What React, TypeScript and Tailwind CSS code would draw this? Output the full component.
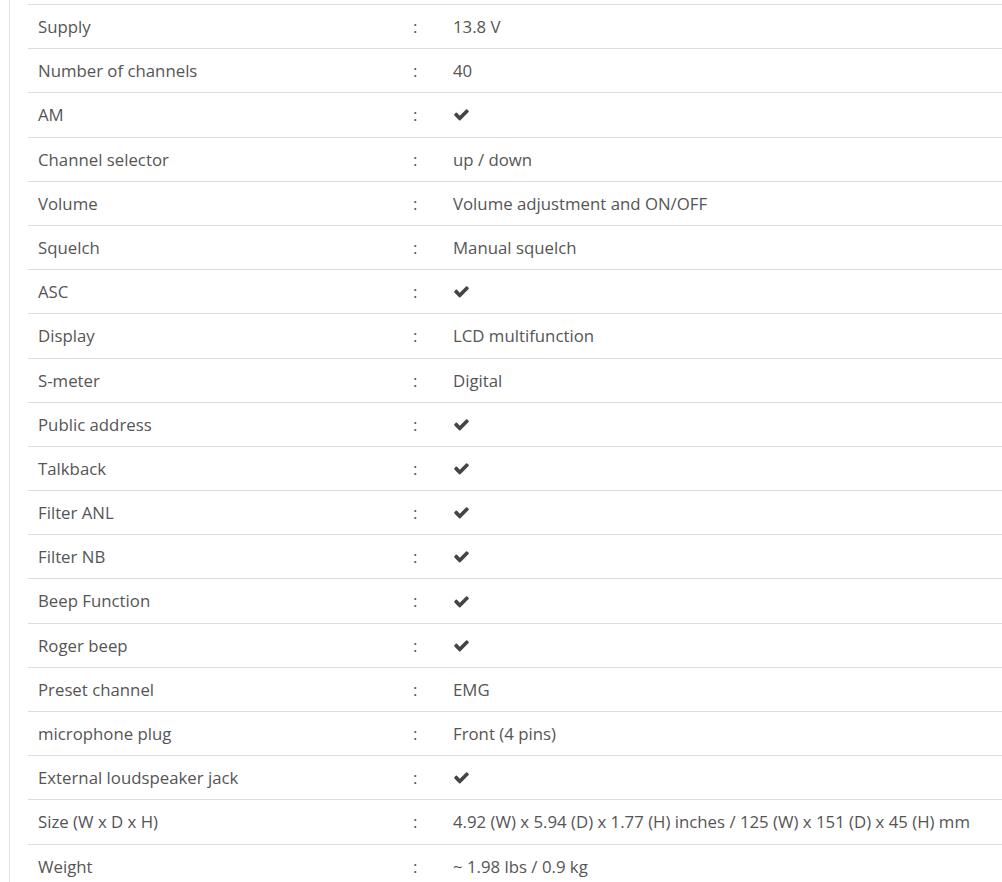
const specs: { label: string; value: string | null }[] = [
  { label: "Supply", value: "13.8 V" },
  { label: "Number of channels", value: "40" },
  { label: "AM", value: null },
  { label: "Channel selector", value: "up / down" },
  { label: "Volume", value: "Volume adjustment and ON/OFF" },
  { label: "Squelch", value: "Manual squelch" },
  { label: "ASC", value: null },
  { label: "Display", value: "LCD multifunction" },
  { label: "S-meter", value: "Digital" },
  { label: "Public address", value: null },
  { label: "Talkback", value: null },
  { label: "Filter ANL", value: null },
  { label: "Filter NB", value: null },
  { label: "Beep Function", value: null },
  { label: "Roger beep", value: null },
  { label: "Preset channel", value: "EMG" },
  { label: "microphone plug", value: "Front (4 pins)" },
  { label: "External loudspeaker jack", value: null },
  { label: "Size (W x D x H)", value: "4.92 (W) x 5.94 (D) x 1.77 (H) inches / 125 (W) x 151 (D) x 45 (H) mm" },
  { label: "Weight", value: "~ 1.98 lbs / 0.9 kg" },
]

function Check() {
  return (
    <svg viewBox="0 0 1792 1792" className="w-[17px] h-[17px] fill-[#444]">
      <path d="M1671 566q0 40-28 68l-724 724-136 136q-28 28-68 28t-68-28l-136-136-362-362q-28-28-28-68t28-68l136-136q28-28 68-28t68 28l294 295 656-657q28-28 68-28t68 28l136 136q28 28 28 68z" />
    </svg>
  )
}

export default function App() {
  return (
    <div className="h-[882px] overflow-hidden bg-white font-['Open_Sans',sans-serif] text-[16.8px] text-[#555]">
      <div className="ml-[9px] h-full border-l border-[#e3e3e3] pl-[18px] pt-[4px]">
        {specs.map((s) => (
          <div key={s.label} className="flex h-[44.2px] items-center border-t border-[#dedede]">
            <div className="w-[375px] px-[10px]">{s.label}</div>
            <div className="w-[40px] px-[10px]">:</div>
            <div className="flex-1 px-[10px] whitespace-nowrap">{s.value ?? <Check />}</div>
          </div>
        ))}
      </div>
    </div>
  )
}
